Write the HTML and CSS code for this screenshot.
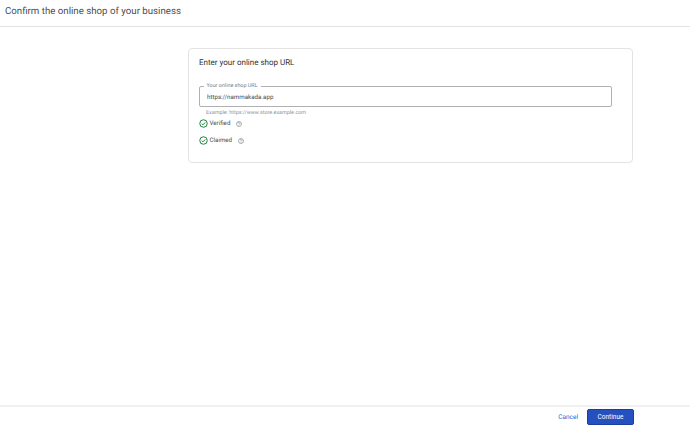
FILE: index.html
```html
<!DOCTYPE html>
<html lang="en">
<head>
    <meta charset="UTF-8">
    <title>Confirm the online shop of your business</title>
    <link rel="stylesheet" href="styles.css">
</head>
<body>
    <header class="top-bar">
        <h1>Confirm the online shop of your business</h1>
    </header>

    <main class="content">
        <section class="card">
            <h2>Enter your online shop URL</h2>
            <div class="field">
                <span class="field-label">Your online shop URL</span>
                <span class="field-value">https://nammakada.app</span>
            </div>
            <p class="hint">Example: https://www.store.example.com</p>
            <div class="status status-verified">
                <svg class="check" viewBox="0 0 24 24"><circle cx="12" cy="12" r="10" fill="none" stroke="#188038" stroke-width="2.6"/><path d="M7.2 12.4l3.2 3.2 6.4-6.6" fill="none" stroke="#188038" stroke-width="2.6"/></svg>
                <span>Verified</span>
                <svg class="help" viewBox="0 0 24 24"><circle cx="12" cy="12" r="10" fill="none" stroke="#5f6368" stroke-width="2"/><path d="M9 9.6a3 3 0 1 1 4.6 2.5c-1 .7-1.6 1.2-1.6 2.4" fill="none" stroke="#5f6368" stroke-width="2"/><circle cx="12" cy="17.6" r="1.2" fill="#5f6368"/></svg>
            </div>
            <div class="status status-claimed">
                <svg class="check" viewBox="0 0 24 24"><circle cx="12" cy="12" r="10" fill="none" stroke="#188038" stroke-width="2.6"/><path d="M7.2 12.4l3.2 3.2 6.4-6.6" fill="none" stroke="#188038" stroke-width="2.6"/></svg>
                <span>Claimed</span>
                <svg class="help" viewBox="0 0 24 24"><circle cx="12" cy="12" r="10" fill="none" stroke="#5f6368" stroke-width="2"/><path d="M9 9.6a3 3 0 1 1 4.6 2.5c-1 .7-1.6 1.2-1.6 2.4" fill="none" stroke="#5f6368" stroke-width="2"/><circle cx="12" cy="17.6" r="1.2" fill="#5f6368"/></svg>
            </div>
        </section>
    </main>

    <footer class="bottom-bar">
        <a class="cancel" href="#">Cancel</a>
        <button class="continue" type="button">Continue</button>
    </footer>
</body>
</html>
```

FILE: styles.css
```css
/* General Styles */
html, body {
    height: 100%;
}

body {
    margin: 0;
    display: flex;
    flex-direction: column;
    font-family: Roboto, "Liberation Sans", sans-serif;
    text-rendering: geometricPrecision;
    color: #4a4d50;
    background: #fff;
    overflow: hidden;
}

/* Top Bar */
.top-bar {
    height: 26px;
    flex: none;
    border-bottom: 1px solid #e3e3e3;
    padding-left: 5px;
}

h1 {
    margin: 4px 0 0;
    font-size: 9.7px;
    line-height: 16px;
    font-weight: 400;
    color: #4a4d50;
}

/* Card */
.content {
    flex: 1;
    padding: 21px 0 0 188px;
}

.card {
    box-sizing: border-box;
    width: 445px;
    height: 115px;
    padding: 8px 20px 0 10px;
    border: 1px solid #e3e3e3;
    border-radius: 4px;
}

h2 {
    margin: 0;
    font-size: 8px;
    line-height: 11px;
    font-weight: 400;
    color: #303134;
}

/* Input Field */
.field {
    position: relative;
    box-sizing: border-box;
    height: 21px;
    margin-top: 18px;
    padding: 6px 7px 0;
    border: 1px solid #b0b0b0;
    border-radius: 2px;
}

.field-label {
    position: absolute;
    top: -4px;
    left: 3.5px;
    padding: 0 3px;
    font-size: 5.4px;
    line-height: 7px;
    color: #7a7e83;
    background: #fff;
}

.field-value {
    display: block;
    font-size: 6.2px;
    line-height: 8px;
    color: #4a4d50;
}

.hint {
    margin: 3px 0 0 7px;
    font-size: 5.4px;
    line-height: 7px;
    color: #8f9499;
}

/* Status Rows */
.status {
    display: flex;
    align-items: center;
    font-size: 6.2px;
    line-height: 9px;
    color: #4a4d50;
}

.status-verified {
    margin-top: 2px;
}

.status-claimed {
    margin-top: 8px;
}

.check {
    width: 9px;
    height: 9px;
}

.status span {
    margin-left: 1.5px;
}

.help {
    width: 6px;
    height: 6px;
    margin-left: 6px;
}

/* Bottom Bar */
.bottom-bar {
    height: 20px;
    flex: none;
    display: flex;
    align-items: center;
    justify-content: flex-end;
    padding-right: 56px;
    border-top: 2px solid #f0f0f0;
}

.cancel {
    margin-right: 9px;
    font-size: 6.5px;
    color: #1a5fd8;
    text-decoration: none;
}

.continue {
    width: 47px;
    height: 16px;
    padding: 0;
    border: 1px solid #1b3d9e;
    border-radius: 2px;
    font-family: inherit;
    font-size: 6.5px;
    color: #fff;
    background: #2450c0;
}
```
